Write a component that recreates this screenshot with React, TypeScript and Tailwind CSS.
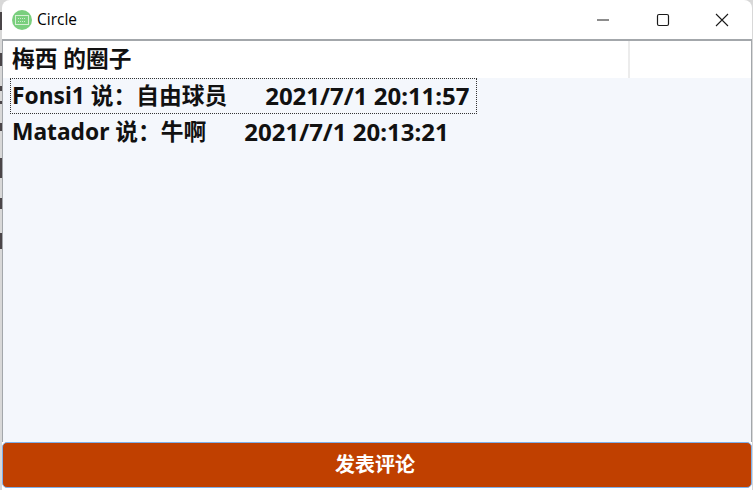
const fontStack = "font-['Noto_Sans','Noto_Sans_CJK_SC',sans-serif]";

const comments = [
  { text: 'Fonsi1 说：自由球员', time: '2021/7/1 20:11:57', selected: true },
  { text: 'Matador 说：牛啊', time: '2021/7/1 20:13:21', selected: false },
];

// bits of whatever sits behind the window, visible along the left edge
const behind = [
  { gap: 'mt-[12px]', height: 'h-[18px]' },
  { gap: 'mt-[23px]', height: 'h-[13px]' },
  { gap: 'mt-[20px]', height: 'h-[5px]' },
  { gap: 'mt-[10px]', height: 'h-[3px]' },
  { gap: 'mt-[19px]', height: 'h-[8px]' },
  { gap: 'mt-[27px]', height: 'h-[20px]' },
  { gap: 'mt-[20px]', height: 'h-[11px]' },
  { gap: 'mt-[24px]', height: 'h-[16px]' },
];

function AppIcon() {
  return (
    <svg width="20" height="20" viewBox="0 0 20 20" className="shrink-0">
      <circle cx="10" cy="10" r="10" fill="#7acf7e" />
      <rect x="3.5" y="5.5" width="13" height="9" fill="none" stroke="#d6f0d4" strokeWidth="1" />
      <path d="M6 8.5h8M6 11.5h8" stroke="#cfeecd" strokeWidth="1" strokeDasharray="1 1" />
    </svg>
  );
}

function WindowControls() {
  return (
    <div className="flex items-center text-[#1a1a1a]">
      <svg width="14" height="14" viewBox="0 0 14 14" className="mr-[46px]">
        <path d="M1 7h12" stroke="currentColor" strokeWidth="1" />
      </svg>
      <svg width="14" height="14" viewBox="0 0 14 14" className="mr-[45px]">
        <rect x="1.5" y="1.5" width="11" height="11" rx="1.5" fill="none" stroke="currentColor" strokeWidth="1.2" />
      </svg>
      <svg width="14" height="14" viewBox="0 0 14 14" className="mr-[23px]">
        <path d="M1 1l12 12M13 1L1 13" stroke="currentColor" strokeWidth="1.1" />
      </svg>
    </div>
  );
}

export default function App() {
  return (
    <div className={`w-[753px] h-[490px] overflow-hidden bg-[#d8d8d8] flex pr-px ${fontStack}`}>
      <div className="w-[2px] shrink-0 flex flex-col">
        {behind.map((b, i) => (
          <div key={i} className={`${b.gap} ${b.height} bg-[#4a4548]`} />
        ))}
      </div>

      <div className="flex-1 min-w-0 flex flex-col bg-white rounded-t-lg overflow-hidden">
        {/* Title bar */}
        <div className="h-[39px] shrink-0 flex items-center justify-between pl-[10px]">
          <div className="flex items-center gap-[5px]">
            <AppIcon />
            <span className="text-[15.5px] text-black font-['Open_Sans',sans-serif]">Circle</span>
          </div>
          <WindowControls />
        </div>

        {/* Client area */}
        <div className="flex-1 min-h-0 flex flex-col border-t-2 border-x border-[#a3a7ab]">
          <div className="h-[37px] shrink-0 flex bg-white">
            <div className="w-[627px] border-r-2 border-[#ececec] pl-[9px] flex items-center">
              <span className="text-[22.7px] font-bold text-[#111] leading-none">梅西 的圈子</span>
            </div>
          </div>

          <div className="flex-1 min-h-0 bg-[#f4f7fc] pl-[7px] flex flex-col items-start">
            {comments.map((c) => (
              <div
                key={c.time}
                className={`h-[36px] pl-[1px] pr-[6px] flex items-center text-[22.75px] font-bold text-[#111] whitespace-nowrap border border-dotted ${
                  c.selected ? 'border-[#333]' : 'border-transparent'
                }`}
              >
                <span>{c.text}</span>
                <span className="ml-[38px] text-[24px]">{c.time}</span>
              </div>
            ))}
          </div>
        </div>

        <button className="h-[46px] shrink-0 mb-[2px] pr-[4px] rounded-[5px] bg-[#c04000] border border-[#7fb0ea] text-white text-[20px] font-bold">
          发表评论
        </button>
      </div>
    </div>
  );
}
